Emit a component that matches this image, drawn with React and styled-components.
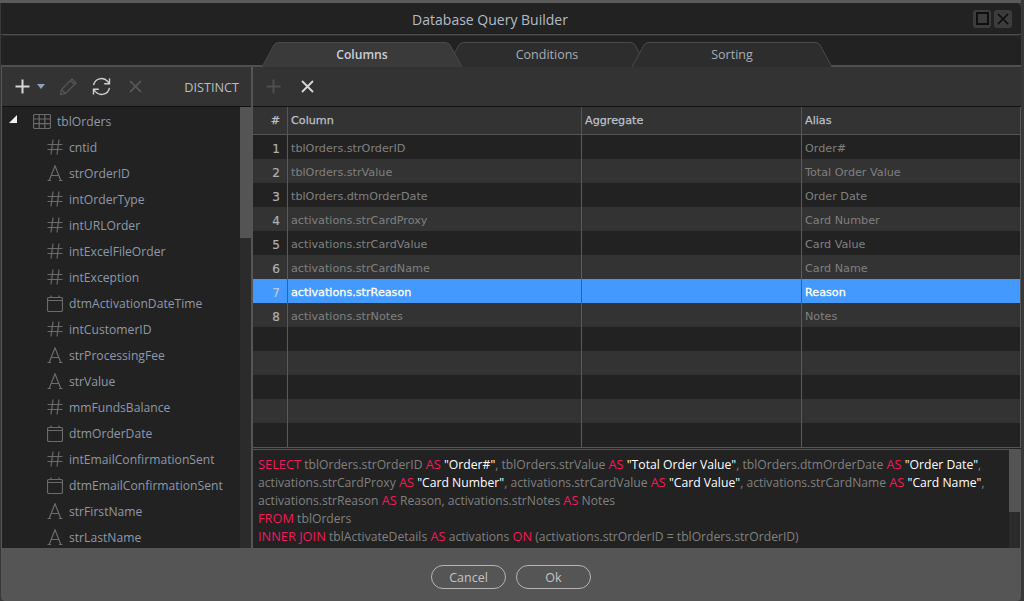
import React from "react";
import styled, { createGlobalStyle } from "styled-components";

const Global = createGlobalStyle`
  html, body { margin: 0; padding: 0; background: #383838; height: 100%; overflow: hidden; }
  #root { height: 100%; }
  * { box-sizing: border-box; }
`;
const uiFont = `"Open Sans", "Noto Sans", sans-serif`;
const gridFont = `"DejaVu Sans", sans-serif`;

const Window = styled.div`
  width: 1021px; height: 601px; padding-top: 3px; background: linear-gradient(#5a5a5a 0 3px, transparent 3px);
  display: flex; flex-direction: column;
`;
const Frame = styled.div`
  flex: 1; display: flex; flex-direction: column; overflow: hidden; background: #222;
  border-radius: 0 6px 4px 4px; margin-left: 1px;
`;
const TitleBar = styled.header`
  height: 32px; flex: none; background: #222; border-bottom: 1px solid #4d4d4d; display: flex; align-items: center;
  justify-content: flex-end; position: relative; padding-right: 9px; gap: 3px;
`;
const Title = styled.h1`
  position: absolute; left: 0; right: 42px; top: 0; margin: 0; text-align: center;
  font: 400 14px/34px ${uiFont}; color: #b4bbc6;
`;
const WinBtn = styled.button`
  width: 18px; height: 18px; padding: 0; border: 0; border-radius: 3px; background: #3c3c3c; display: flex; align-items: center; justify-content: center;
`;
const TabStrip = styled.nav`
  height: 32px; flex: none; background: #222; padding: 6px 0 0 261px; display: flex; border-bottom: 2px solid #4f4f4f; border-radius: 5px 5px 0 0;
  border-top: 1px solid #333;
`;
const Tab = styled.div`
  position: relative; width: 200px; height: 25px; margin-right: -15px; z-index: ${p => (p.$active ? 2 : 1)};
  display: flex; align-items: center; justify-content: center;
  font: ${p => (p.$active ? 600 : 400)} ${p => (p.$active ? 12.2 : 12.5)}px ${uiFont}; color: ${p => (p.$active ? "#c9ced6" : "#a8adb5")};
  span { position: relative; }
  svg { position: absolute; inset: 0; }
`;
const Content = styled.div`
  flex: 1; display: flex; min-height: 0;
`;
const LeftPane = styled.section`
  width: 251px; flex: none; display: flex; flex-direction: column; border-right: 1px solid #555; border-left: 1px solid #555; border-bottom: 1px solid #555;
`;
const RightPane = styled.section`
  flex: 1; min-width: 0; display: flex; flex-direction: column; border-left: 1px solid #555;
`;
const Toolbar = styled.div`
  height: 40px; flex: none; background: #333; border-bottom: 1px solid #111; display: flex; align-items: center; position: relative;
`;
const ToolBtn = styled.span`
  display: inline-flex; width: ${p => p.$w}px; justify-content: center; align-items: center; margin-left: ${p => p.$ml || 0}px;
`;
const Distinct = styled.span`
  margin-left: auto; padding-right: 12px; font: 400 12.7px ${uiFont}; color: #b9bdc4;
`;
const TreeWrap = styled.div`
  flex: 1; min-height: 0; display: flex; background: #222;
`;
const Tree = styled.ul`
  flex: 1; margin: 0; padding: 1px 0 0 0; list-style: none; overflow: hidden;
`;
const TreeRow = styled.li`
  height: 26px; display: flex; align-items: center; gap: 6px; padding-left: ${p => (p.$root ? 7 : 45)}px;
  font: 400 12.15px ${uiFont}; color: #8d98a8; white-space: nowrap;
`;
const Caret = styled.i`
  width: 0; height: 0; border-style: solid; border-width: 0 0 8px 8px; border-color: transparent transparent #f2f2f2 transparent; margin-right: 10px; margin-top: -5px;
`;
const ScrollTrack = styled.div`
  width: 11px; flex: none; background: #2b2b2b; 
`;
const ScrollThumb = styled.div`
  height: ${p => p.$h}px; background: #545454;
`;
const Grid = styled.div`
  height: 341px; flex: none; border-right: 1px solid #555; border-bottom: 1px solid #555; background: #222;
`;
const columns = "35px 294px 220px 1fr";
const HeadRow = styled.div`
  height: 28px; display: grid; grid-template-columns: ${columns}; background: #333; border-bottom: 1px solid #555;
`;
const HeadCell = styled.div`
  border-right: 1px solid #555; padding: 0 3px; font: 400 11.2px/28px ${gridFont}; color: #bcc0ca; text-align: ${p => (p.$num ? "right" : "left")};
  -webkit-text-stroke: 0.25px #bcc0ca;
  padding-right: ${p => (p.$num ? 7 : 3)}px;
  &:last-child { border-right: 0; }
`;
const Row = styled.div`
  height: 24px; display: grid; grid-template-columns: ${columns};
  background: ${p => (p.$sel ? "#4499ff" : p.$alt ? "#333" : "#222")};
`;
const Cell = styled.div`
  border-right: 1px solid #5a5a5a; padding: 1px 3px 0; font: 400 11.2px/26px ${gridFont}; color: ${p => (p.$sel ? "#fff" : "#808080")}; white-space: nowrap; overflow: hidden;
  -webkit-text-stroke: ${p => (p.$sel ? "0.3px #fff" : "0")};
  &:last-child { border-right: 0; }
`;
const NumCell = styled(Cell)`
  text-align: right; padding-right: 7px; font-size: 12px; color: ${p => (p.$sel ? "#b9cbe2" : "#b0b0b0")};
  -webkit-text-stroke: 0.2px ${p => (p.$sel ? "#b9cbe2" : "#b0b0b0")};
`;
const SqlWrap = styled.div`
  flex: 1; min-height: 0; display: flex; background: #222; border-top: 1px solid #555; border-right: 1px solid #555; border-bottom: 1px solid #555; margin-top: 1px;
`;
const Sql = styled.div`
  flex: 1; padding: 5px 5px 0; font: 400 12.15px/18px ${uiFont}; color: #808080; overflow: hidden;
`;
const Line = styled.div`white-space: nowrap; height: 18px;`;
const Kw = styled.span`color: #f0195a; font-size: 12.8px;`;
const Str = styled.span`color: #fff; font-size: 12.2px;`;
const Footer = styled.footer`
  height: 52px; flex: none; background: #555; display: flex; justify-content: center; align-items: center; gap: 10px; padding: 4px 0 0 0;
`;
const Btn = styled.button`
  width: 75px; height: 24px; background: transparent; border: 1px solid #b5b5b5; border-radius: 12px; font: 400 12.5px ${uiFont}; color: #c4c4c4; padding: 0;
`;

const stroke = { fill: "none", strokeWidth: 1.2 };
const Hash = () => (
  <svg width="16" height="16" viewBox="0 0 16 16" stroke="#6b6b6b" {...stroke}>
    <path d="M0.5 5.5H15.5M0.5 10.5H15.5M6 0.5L4 15.5M12 0.5L10 15.5" />
  </svg>
);
const Letter = () => (
  <svg width="16" height="16" viewBox="0 0 16 16" stroke="#6b6b6b" {...stroke}>
    <path d="M0.5 15.5H4M12 15.5H15.5M2.2 15.5L8 0.8L13.8 15.5M4.3 10.5H11.7" />
  </svg>
);
const Cal = () => (
  <svg width="16" height="17" viewBox="0 0 16 17" stroke="#6b6b6b" {...stroke}>
    <rect x="0.5" y="2.5" width="15" height="14" rx="1.5" />
    <path d="M0.5 5.5H15.5M4 0.5V3M12 0.5V3" />
  </svg>
);
const TableIcon = () => (
  <svg width="18" height="15" viewBox="0 0 18 15" stroke="#6b6b6b" {...stroke}>
    <rect x="0.5" y="0.5" width="17" height="14" rx="1.5" />
    <path d="M0.5 5H17.5M0.5 9.7H17.5M6.2 0.5V14.5M11.8 0.5V14.5" />
  </svg>
);
const icons = { h: Hash, a: Letter, c: Cal };

const Plus = ({ c }) => (
  <svg width="15" height="15" viewBox="0 0 15 15" stroke={c} strokeWidth="2"><path d="M7.5 0.5V14.5M0.5 7.5H14.5" /></svg>
);
const Cross = ({ c, s = 13 }) => (
  <svg width={s} height={s} viewBox="0 0 13 13" stroke={c} strokeWidth="1.8"><path d="M1 1L12 12M12 1L1 12" /></svg>
);
const Pencil = () => (
  <svg width="19" height="19" viewBox="0 0 19 19" fill="none" stroke="#555" strokeWidth="1.3">
    <path d="M1.5 17.5L2.5 12.5L13 2L17 6L6.5 16.5ZM11.5 3.5L15.5 7.5M2.5 12.5L6.5 16.5" />
  </svg>
);
const Refresh = () => (
  <svg width="19" height="19" viewBox="0 0 19 19" fill="none" stroke="#d0d0d0" strokeWidth="1.4">
    <path d="M1.6 8.2A8 8 0 0 1 15.6 4.4L17.5 6.8M17.5 1.5V6.8H12.2" />
    <path d="M17.4 10.8A8 8 0 0 1 3.4 14.6L1.5 12.2M1.5 17.5V12.2H6.8" />
  </svg>
);
const TabShape = ({ fill, line }) => (
  <svg width="200" height="25" viewBox="0 0 200 25">
    <path d="M0 25L12 3Q13.5 0.5 17 0.5H183Q186.5 0.5 188 3L200 25" fill={fill} stroke={line} />
  </svg>
);

const treeItems = [
  ["h", "cntid"], ["a", "strOrderID"], ["h", "intOrderType"], ["h", "intURLOrder"], ["h", "intExcelFileOrder"],
  ["h", "intException"], ["c", "dtmActivationDateTime"], ["h", "intCustomerID"], ["a", "strProcessingFee"], ["a", "strValue"],
  ["h", "mmFundsBalance"], ["c", "dtmOrderDate"], ["h", "intEmailConfirmationSent"], ["c", "dtmEmailConfirmationSent"],
  ["a", "strFirstName"], ["a", "strLastName"],
];
const rows = [
  ["tblOrders.strOrderID", "Order#"], ["tblOrders.strValue", "Total Order Value"], ["tblOrders.dtmOrderDate", "Order Date"],
  ["activations.strCardProxy", "Card Number"], ["activations.strCardValue", "Card Value"], ["activations.strCardName", "Card Name"],
  ["activations.strReason", "Reason"], ["activations.strNotes", "Notes"], ["", ""], ["", ""], ["", ""], ["", ""], ["", ""],
];

export default function App() {
  return (
    <>
      <Global />
      <Window>
        <Frame>
          <TitleBar>
            <Title>Database Query Builder</Title>
            <WinBtn>
              <svg width="13" height="13" viewBox="0 0 13 13" fill="none" stroke="#0f0f0f" strokeWidth="2"><rect x="1" y="1" width="11" height="11" /></svg>
            </WinBtn>
            <WinBtn><Cross c="#0f0f0f" s={12} /></WinBtn>
          </TitleBar>
          <TabStrip>
            <Tab $active><TabShape fill="#3a3a3a" line="#4a4a4a" /><span>Columns</span></Tab>
            <Tab><TabShape fill="#2d2d2d" line="#4a4a4a" /><span>Conditions</span></Tab>
            <Tab><TabShape fill="#2d2d2d" line="#4a4a4a" /><span>Sorting</span></Tab>
          </TabStrip>
          <Content>
            <LeftPane>
              <Toolbar>
                <ToolBtn $w={15} $ml={13}><Plus c="#d8d8d8" /></ToolBtn>
                <ToolBtn $w={9} $ml={6}>
                  <svg width="8" height="5" viewBox="0 0 8 5"><path d="M0 0H8L4 5Z" fill="#8aa0bd" /></svg>
                </ToolBtn>
                <ToolBtn $w={19} $ml={14}><Pencil /></ToolBtn>
                <ToolBtn $w={19} $ml={14}><Refresh /></ToolBtn>
                <ToolBtn $w={13} $ml={18}><Cross c="#555" /></ToolBtn>
                <Distinct>DISTINCT</Distinct>
              </Toolbar>
              <TreeWrap>
                <Tree>
                  <TreeRow $root><Caret /><TableIcon /><span>tblOrders</span></TreeRow>
                  {treeItems.map(([k, n]) => {
                    const I = icons[k];
                    return <TreeRow key={n}><I /><span>{n}</span></TreeRow>;
                  })}
                </Tree>
                <ScrollTrack><ScrollThumb $h={131} /></ScrollTrack>
              </TreeWrap>
            </LeftPane>
            <RightPane>
              <Toolbar>
                <ToolBtn $w={15} $ml={13}><Plus c="#4f4f4f" /></ToolBtn>
                <ToolBtn $w={13} $ml={20}><Cross c="#d8d8d8" /></ToolBtn>
              </Toolbar>
              <Grid>
                <HeadRow>
                  <HeadCell $num>#</HeadCell><HeadCell>Column</HeadCell><HeadCell>Aggregate</HeadCell><HeadCell>Alias</HeadCell>
                </HeadRow>
                {rows.map((r, i) => (
                  <Row key={i} $alt={i % 2 === 1} $sel={i === 6}>
                    <NumCell $sel={i === 6}>{r[0] ? i + 1 : ""}</NumCell>
                    <Cell $sel={i === 6}>{r[0]}</Cell>
                    <Cell />
                    <Cell $sel={i === 6}>{r[1]}</Cell>
                  </Row>
                ))}
              </Grid>
              <SqlWrap>
                <Sql>
                  <Line><Kw>SELECT</Kw> tblOrders.strOrderID <Kw>AS</Kw> <Str>"Order#"</Str>, tblOrders.strValue <Kw>AS</Kw> <Str>"Total Order Value"</Str>, tblOrders.dtmOrderDate <Kw>AS</Kw> <Str>"Order Date"</Str>,</Line>
                  <Line>activations.strCardProxy <Kw>AS</Kw> <Str>"Card Number"</Str>, activations.strCardValue <Kw>AS</Kw> <Str>"Card Value"</Str>, activations.strCardName <Kw>AS</Kw> <Str>"Card Name"</Str>,</Line>
                  <Line>activations.strReason <Kw>AS</Kw> Reason, activations.strNotes <Kw>AS</Kw> Notes</Line>
                  <Line><Kw>FROM</Kw> tblOrders</Line>
                  <Line><Kw>INNER JOIN</Kw> tblActivateDetails <Kw>AS</Kw> activations <Kw>ON</Kw> (activations.strOrderID = tblOrders.strOrderID)</Line>
                </Sql>
                <ScrollTrack><ScrollThumb $h={62} /></ScrollTrack>
              </SqlWrap>
            </RightPane>
          </Content>
          <Footer>
            <Btn>Cancel</Btn>
            <Btn>Ok</Btn>
          </Footer>
        </Frame>
      </Window>
    </>
  );
}
